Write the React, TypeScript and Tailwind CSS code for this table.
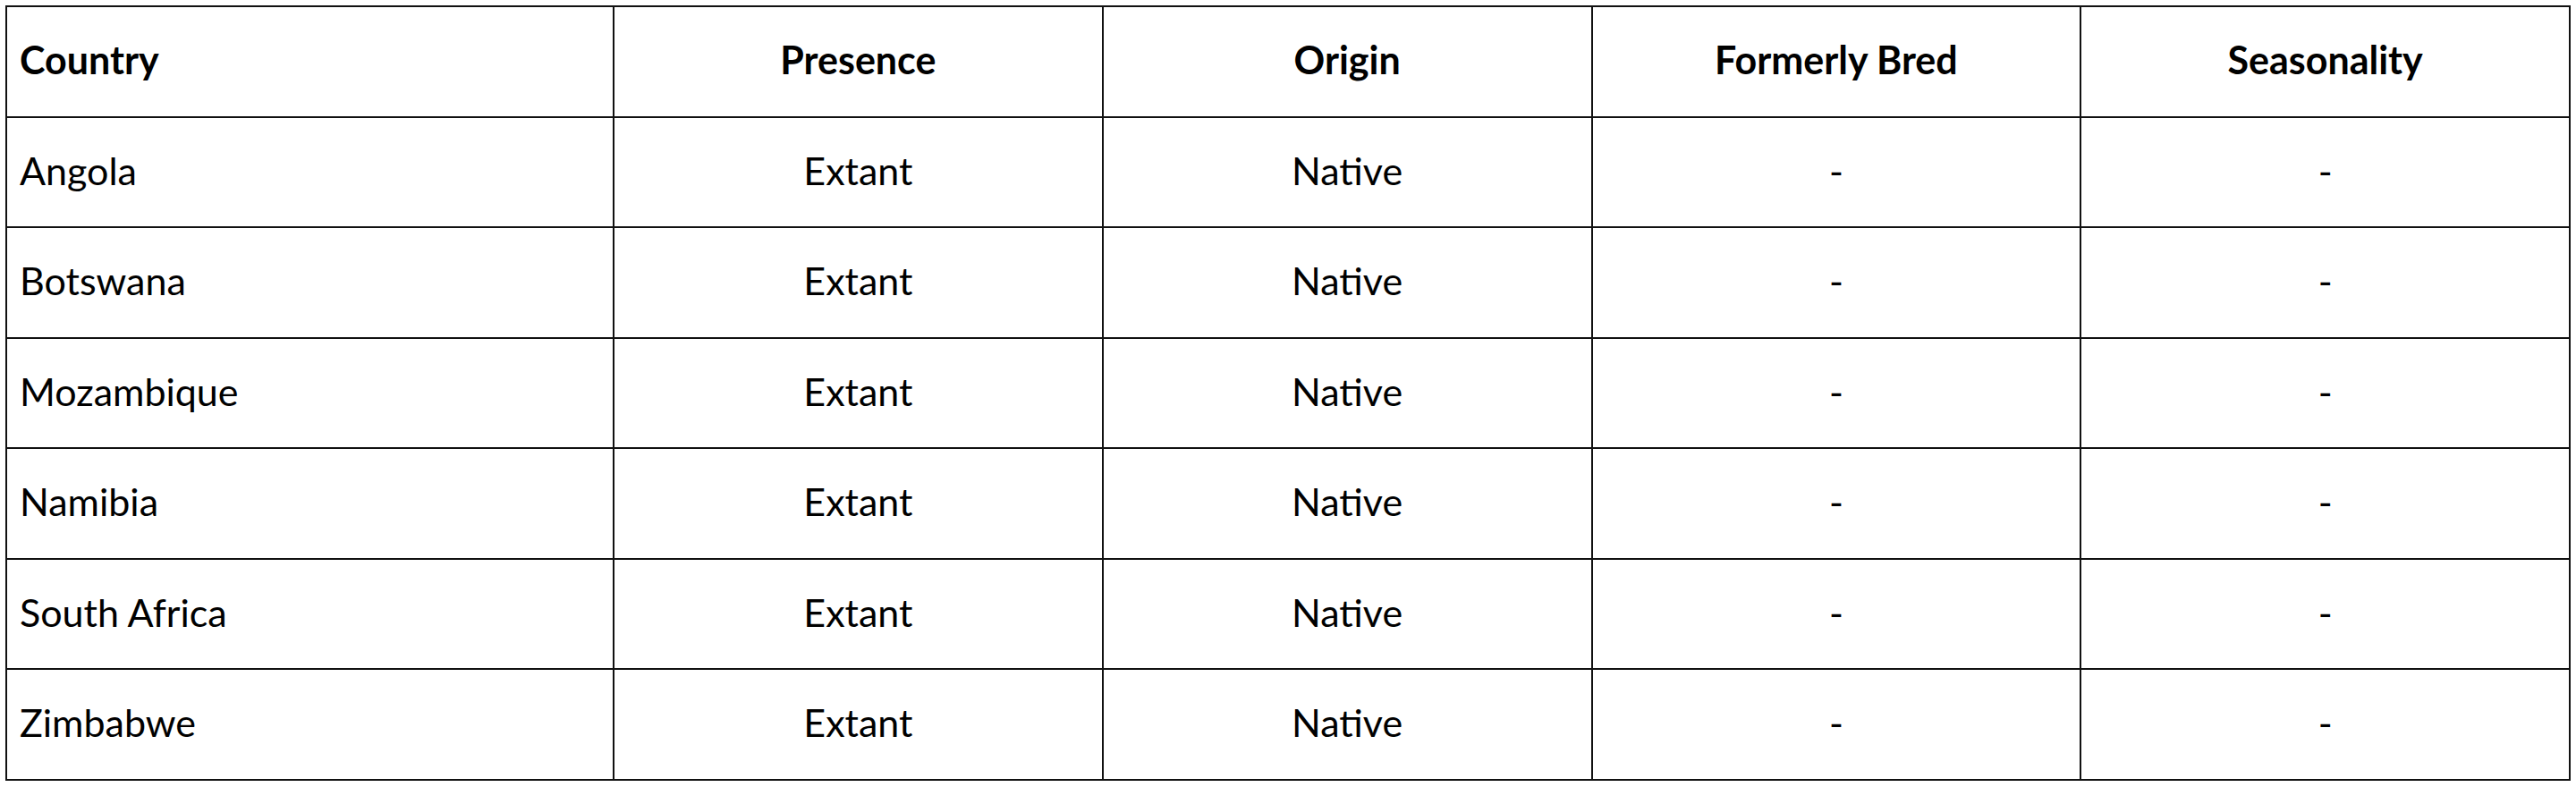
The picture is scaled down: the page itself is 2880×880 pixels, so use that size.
import React from 'react';

type Row = {
  country: string;
  presence: string;
  origin: string;
  formerlyBred: string;
  seasonality: string;
};

const rows: Row[] = [
  { country: 'Angola', presence: 'Extant', origin: 'Native', formerlyBred: '-', seasonality: '-' },
  { country: 'Botswana', presence: 'Extant', origin: 'Native', formerlyBred: '-', seasonality: '-' },
  { country: 'Mozambique', presence: 'Extant', origin: 'Native', formerlyBred: '-', seasonality: '-' },
  { country: 'Namibia', presence: 'Extant', origin: 'Native', formerlyBred: '-', seasonality: '-' },
  { country: 'South Africa', presence: 'Extant', origin: 'Native', formerlyBred: '-', seasonality: '-' },
  { country: 'Zimbabwe', presence: 'Extant', origin: 'Native', formerlyBred: '-', seasonality: '-' },
];

const headers = ['Presence', 'Origin', 'Formerly Bred', 'Seasonality'];

const cell = 'border-2 border-[#111] h-[123.5px] pb-1 text-[43px] leading-none';

const App: React.FC = () => {
  return (
    <div className="bg-white p-[6px] font-['Lato','Liberation_Sans',sans-serif] text-black">
      <table className="w-full table-fixed border-collapse">
        <colgroup>
          <col className="w-[679px]" />
          <col />
          <col />
          <col />
          <col />
        </colgroup>
        <thead>
          <tr>
            <th className={`${cell} pl-[14px] text-left font-bold`}>Country</th>
            {headers.map((h) => (
              <th key={h} className={`${cell} text-center font-bold`}>
                {h}
              </th>
            ))}
          </tr>
        </thead>
        <tbody>
          {rows.map((r) => (
            <tr key={r.country}>
              <td className={`${cell} pl-[14px] text-left`}>{r.country}</td>
              <td className={`${cell} text-center`}>{r.presence}</td>
              <td className={`${cell} text-center`}>{r.origin}</td>
              <td className={`${cell} text-center`}>{r.formerlyBred}</td>
              <td className={`${cell} text-center`}>{r.seasonality}</td>
            </tr>
          ))}
        </tbody>
      </table>
    </div>
  );
};

export default App;
